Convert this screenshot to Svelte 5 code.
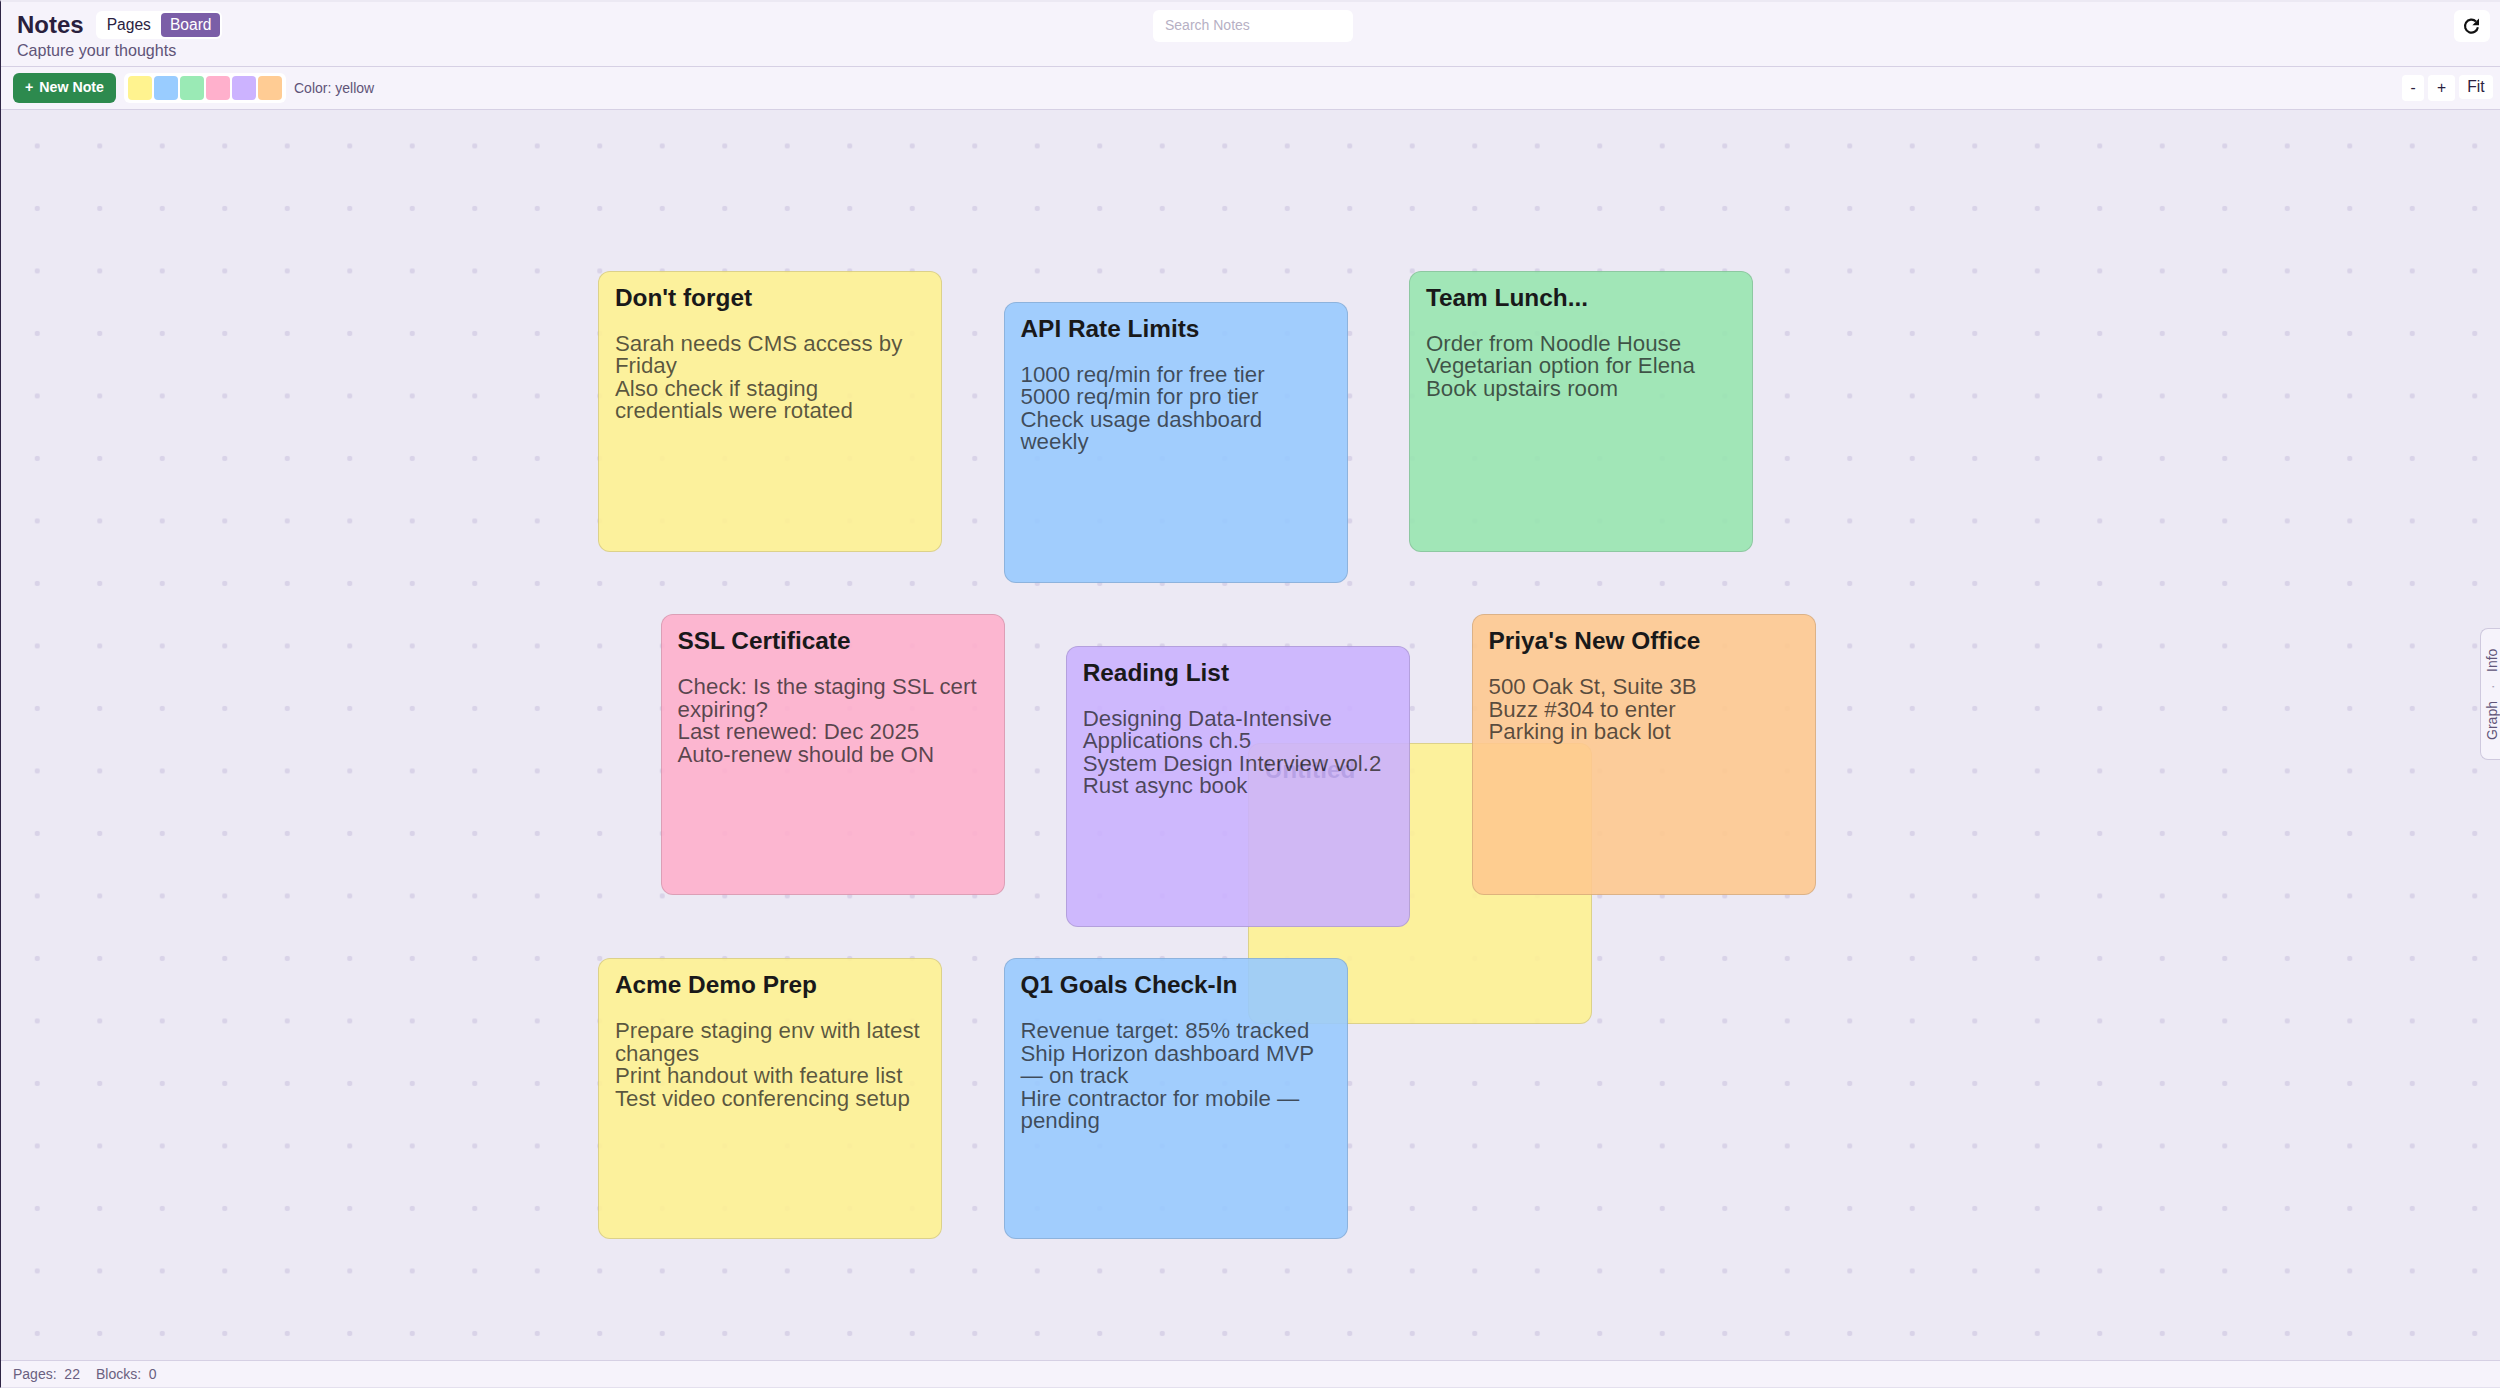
<script>
  const swatches = ['yellow', 'blue', 'green', 'pink', 'purple', 'orange'];
  const notes = [
    { title: 'Untitled', body: '', color: 'yellow', x: 1247.2, y: 742.9 },
    { title: "Don't forget", body: 'Sarah needs CMS access by Friday\nAlso check if staging credentials were rotated', color: 'yellow', x: 597.4, y: 270.6 },
    { title: 'API Rate Limits', body: '1000 req/min for free tier\n5000 req/min for pro tier\nCheck usage dashboard weekly', color: 'blue', x: 1003, y: 301.8 },
    { title: 'Team Lunch...', body: 'Order from Noodle House\nVegetarian option for Elena\nBook upstairs room', color: 'green', x: 1408.4, y: 270.6 },
    { title: 'SSL Certificate', body: 'Check: Is the staging SSL cert expiring?\nLast renewed: Dec 2025\nAuto-renew should be ON', color: 'pink', x: 660, y: 614.4 },
    { title: 'Reading List', body: 'Designing Data-Intensive Applications ch.5\nSystem Design Interview vol.2\nRust async book', color: 'purple', x: 1065.2, y: 645.6 },
    { title: "Priya's New Office", body: '500 Oak St, Suite 3B\nBuzz #304 to enter\nParking in back lot', color: 'orange', x: 1471, y: 614.4 },
    { title: 'Acme Demo Prep', body: 'Prepare staging env with latest changes\nPrint handout with feature list\nTest video conferencing setup', color: 'yellow', x: 597.4, y: 958.1 },
    { title: 'Q1 Goals Check-In', body: 'Revenue target: 85% tracked\nShip Horizon dashboard MVP — on track\nHire contractor for mobile — pending', color: 'blue', x: 1003, y: 958.1 }
  ];
</script>

<div class="app">
  <header class="header">
    <div class="brand">
      <div class="title-row">
        <h1>Notes</h1>
        <div class="tabs">
          <span class="tab">Pages</span>
          <span class="tab active">Board</span>
        </div>
      </div>
      <p class="subtitle">Capture your thoughts</p>
    </div>
    <input class="search" placeholder="Search Notes" />
    <button class="refresh" aria-label="Refresh">
      <svg width="18" height="18" viewBox="0 0 18 18" fill="none">
        <path d="M14.9 10.2a6.5 6.5 0 1 1-1.9-5.8" stroke="#111" stroke-width="2.1" />
        <path d="M16 1.4v6.8H9.4z" fill="#111" />
      </svg>
    </button>
  </header>

  <div class="toolbar">
    <button class="new-note"><span class="plus">+</span> New Note</button>
    <div class="swatches">
      {#each swatches as s}
        <span class="swatch {s}"></span>
      {/each}
    </div>
    <span class="color-label">Color: yellow</span>
    <div class="zoom">
      <button class="zbtn minus">-</button>
      <button class="zbtn plus-btn">+</button>
      <button class="zbtn fit">Fit</button>
    </div>
  </div>

  <main class="canvas">
    {#each notes as n}
      <article class="note {n.color}" style="left:{n.x}px;top:{n.y - 110}px">
        <h2>{n.title}</h2>
        <p>{n.body}</p>
      </article>
    {/each}
    <div class="side-tab">
      <div class="side-labels">
        <span>Graph</span>
        <span class="sep">·</span>
        <span>Info</span>
      </div>
    </div>
  </main>

  <footer class="status">
    <span>Pages:&nbsp; 22</span>
    <span>Blocks:&nbsp; 0</span>
  </footer>
</div>

<style>
  :global(body) {
    margin: 0;
    background: #f6f3fb;
    overflow: hidden;
  }
  .app {
    box-sizing: border-box;
    width: 2500px;
    height: 1388px;
    display: flex;
    flex-direction: column;
    border-left: 1px solid #2f2545;
    border-top: 2px solid #ece9f3;
    border-bottom: 1px solid #e4e0ee;
    font-family: "Liberation Sans", Arial, sans-serif;
    color: #2a2140;
  }
  .header {
    position: relative;
    box-sizing: border-box;
    height: 65px;
    flex: none;
    display: flex;
    align-items: flex-start;
    justify-content: space-between;
    padding: 8px 10px 0 16px;
    border-bottom: 1px solid #d6d0e4;
    background: #f6f3fb;
  }
  .title-row {
    display: flex;
    align-items: center;
    gap: 12px;
    height: 30px;
  }
  h1 {
    margin: 0;
    font-size: 24px;
    line-height: 28px;
    font-weight: 700;
    color: #2a1f3d;
  }
  .tabs {
    display: flex;
    align-items: center;
    height: 28px;
    padding: 0 2px 0 10px;
    background: #fff;
    border-radius: 6px;
    font-size: 15.6px;
  }
  .tab {
    padding: 0 8.5px 0 1px;
    color: #2a2140;
  }
  .tab.active {
    background: #7b5ea7;
    color: #fff;
    border-radius: 4px;
    height: 24px;
    line-height: 24px;
    padding: 0 8.5px;
    margin-left: 2px;
  }
  .subtitle {
    margin: 1px 0 0;
    font-size: 16.1px;
    line-height: 18px;
    color: #5f5478;
  }
  .search {
    position: absolute;
    left: 1152px;
    top: 8px;
    box-sizing: border-box;
    width: 200px;
    height: 32px;
    border: 0;
    border-radius: 6px;
    padding: 0 12px 2px;
    background: #fff;
    font-family: inherit;
    font-size: 14px;
    outline: none;
  }
  .search::placeholder {
    color: #b6b0c4;
  }
  .refresh {
    width: 36px;
    height: 32px;
    border: 0;
    border-radius: 6px;
    background: #fff;
    padding: 0;
    display: flex;
    align-items: center;
    justify-content: center;
  }
  .toolbar {
    box-sizing: border-box;
    height: 43px;
    flex: none;
    display: flex;
    align-items: center;
    padding: 0 6px 0 12px;
    border-bottom: 1px solid #d6d0e4;
    background: #f6f3fb;
  }
  .new-note {
    box-sizing: border-box;
    width: 103px;
    height: 30px;
    border: 0;
    border-radius: 6px;
    background: #2d8a4e;
    color: #fff;
    font: 700 14.2px "Liberation Sans", Arial, sans-serif;
    padding: 0 0 2px;
    white-space: pre;
  }
  .plus {
    margin-right: 2px;
  }
  .swatches {
    margin-left: 8px;
    height: 30px;
    box-sizing: border-box;
    padding: 3px 4px;
    display: flex;
    gap: 2px;
    background: #fff;
    border-radius: 6px;
  }
  .swatch {
    width: 24px;
    height: 24px;
    border-radius: 4px;
  }
  .swatch.yellow { background: #fff38f; }
  .swatch.blue { background: #99ccff; }
  .swatch.green { background: #9aeab5; }
  .swatch.pink { background: #ffb0cc; }
  .swatch.purple { background: #ccb3ff; }
  .swatch.orange { background: #ffcc94; }
  .color-label {
    margin-left: 8px;
    font-size: 14px;
    color: #5f5478;
  }
  .zoom {
    margin-left: auto;
    margin-right: 1px;
    display: flex;
    align-items: center;
    gap: 4px;
  }
  .zbtn {
    border: 0;
    background: #fff;
    border-radius: 4px;
    padding: 0;
    color: #2a2140;
    font: 15.6px "Liberation Sans", Arial, sans-serif;
  }
  .minus { width: 22px; height: 26px; }
  .plus-btn { width: 27px; height: 26px; }
  .fit { width: 34px; height: 24px; margin-top: -2px; }
  .canvas {
    position: relative;
    flex: 1;
    min-height: 0;
    overflow: hidden;
    background-color: #ece9f4;
    background-image: radial-gradient(circle, #d9d3e8 2.5px, transparent 3px);
    background-size: 62.5px 62.5px;
    background-position: 5px 4.7px;
  }
  .note {
    position: absolute;
    box-sizing: border-box;
    width: 344px;
    height: 281px;
    padding: 11px 15.5px;
    border: 1px solid rgba(0, 0, 0, 0.14);
    border-radius: 12px;
    opacity: 0.89;
  }
  .note.yellow { background: #fff292; }
  .note.blue { background: #98caff; }
  .note.green { background: #98e6b0; }
  .note.pink { background: #ffb0cc; }
  .note.purple { background: #cbb2ff; }
  .note.orange { background: #ffc98f; }
  h2 {
    margin: 0 0 20px;
    font-size: 24.4px;
    line-height: 30px;
    font-weight: 700;
    color: #000;
  }
  p {
    margin: 0;
    font-size: 22.3px;
    line-height: 22.5px;
    color: rgba(0, 0, 0, 0.72);
    white-space: pre-line;
  }
  .side-tab {
    position: absolute;
    right: 0;
    top: 518px;
    box-sizing: border-box;
    width: 20px;
    height: 132px;
    display: flex;
    align-items: center;
    justify-content: center;
    padding-left: 2px;
    background: #f6f3fb;
    border: 1px solid #cfc9de;
    border-right: 0;
    border-radius: 8px 0 0 8px;
    font-size: 14px;
    color: #5f5478;
  }
  .side-labels {
    display: flex;
    align-items: center;
    gap: 12px;
    writing-mode: vertical-rl;
    transform: rotate(180deg);
    white-space: nowrap;
  }
  .side-labels .sep {
    color: #a9a3b8;
  }
  .status {
    box-sizing: border-box;
    height: 27px;
    flex: none;
    display: flex;
    align-items: center;
    gap: 16px;
    padding-left: 12px;
    border-top: 1px solid #d6d0e4;
    background: #f6f3fb;
    font-size: 14px;
    color: #6a5f80;
  }
</style>
